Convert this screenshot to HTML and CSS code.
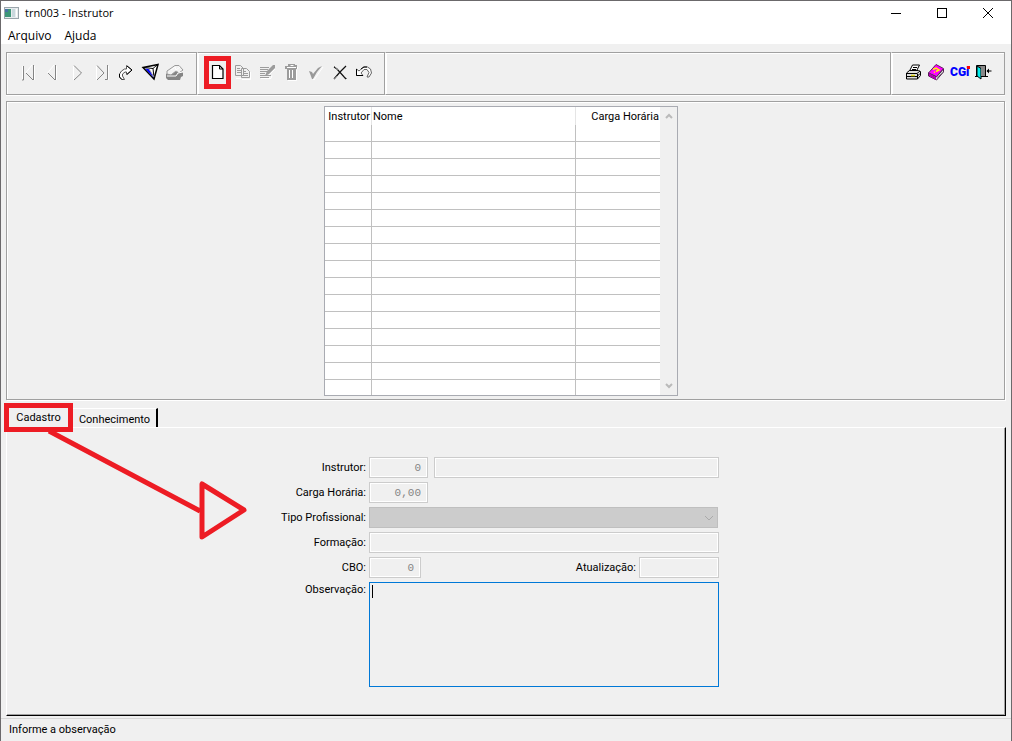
FILE: index.html
```html
<!DOCTYPE html>
<html lang="pt-BR">
<head>
<meta charset="utf-8">
<meta name="viewport" content="width=device-width, initial-scale=1">
<title>trn003 - Instrutor</title>
<link rel="stylesheet" href="styles.css">
</head>
<body>
<div class="window">
  <header class="titlebar">
    <svg class="app-icon" viewBox="0 0 15 12" aria-hidden="true"><rect x=".5" y=".5" width="14" height="11" fill="#e8ecee" stroke="#9aa5ab"/><rect x="1" y="2" width="6" height="8" fill="#3d9678"/><rect x="1" y="2" width="3" height="3" fill="#4773a5"/><rect x="8" y="2" width="3" height="8" fill="#c9d8dd"/><path d="M12.500 2v8" stroke="#fff"/></svg>
    <h1 class="title">trn003 - Instrutor</h1>
    <div class="window-buttons">
      <button class="window-button" type="button" aria-label="Minimizar"><svg viewBox="0 0 12 12"><path d="M1 6.500h10"/></svg></button>
      <button class="window-button" type="button" aria-label="Maximizar"><svg viewBox="0 0 12 12"><path d="M1.500 1.500h9v9h-9z"/></svg></button>
      <button class="window-button" type="button" aria-label="Fechar"><svg viewBox="0 0 12 12"><path class="smooth" d="M1 1l10 10M11 1L1 11"/></svg></button>
    </div>
  </header>
  <nav class="menubar">
    <button class="menu" type="button">Arquivo</button>
    <button class="menu" type="button">Ajuda</button>
  </nav>

  <div class="toolbar">
    <div class="group group-nav">
      <button class="tool" type="button" aria-label="Primeiro"><svg viewBox="0 0 20 20"><path class="light" d="M4.500 4v14M14 3L7.500 11M16.500 4v14"/><path class="gray" d="M5.500 4v14H4M8 11l7 7M15.500 3v15"/></svg></button>
      <button class="tool" type="button" aria-label="Anterior"><svg viewBox="0 0 20 20"><path class="light" d="M11 3L4.500 11M13.500 4v14"/><path class="gray" d="M5 11l7 7M12.500 3v15"/></svg></button>
      <button class="tool" type="button" aria-label="Próximo"><svg viewBox="0 0 20 20"><path class="light" d="M6.500 18V3"/><path class="gray" d="M7 3.500l7.500 7.500L7 18"/></svg></button>
      <button class="tool" type="button" aria-label="Último"><svg viewBox="0 0 20 20"><path class="light" d="M4.500 18V3M16.500 4v14"/><path class="gray" d="M5 3.500l7 7.500-7 7M15.500 3v14.500H13"/></svg></button>
      <button class="tool" type="button" aria-label="Ir para"><svg viewBox="0 0 20 20"><path d="M5.500 17.500L3.500 15v-3l2-3 3-2h2V3.500L16 8l-5.500 4.500V10H9l-2.500 2v2l2 3.500z" fill="#fff" stroke="#555"/><path d="M3.500 12v3l2.500 2.500M11 4l5 4-5 4.500" fill="none" stroke="#000"/></svg></button>
      <button class="tool" type="button" aria-label="Filtrar"><svg viewBox="0 0 20 20"><path d="M2 5.500L17 2.500 13 17z" fill="#fff" stroke="#000" stroke-width="1.500"/><path d="M4 6.500l4 .5 5 9z" fill="#00f"/><path d="M3 5.500l9 1 4-3.500M12 6.500l1 9" stroke="#000" fill="none"/><path d="M8 7l5 8" stroke="#99a"/></svg></button>
      <button class="tool" type="button" aria-label="Localizar"><svg viewBox="0 0 20 20"><path d="M1 12l4-2h13v4l-2 1-1 3H3l-2-2z" fill="#858585"/><path d="M2 9l8-5.500h4L18 8l-4 3-3-2-5 4-4-1z" fill="#f2f2f2" stroke="#999"/><path d="M6 8l4-3 1 3 4-3M2 14h9l2-3 5-1" stroke="#fff" fill="none"/></svg></button>
    </div>
    <div class="group group-edit">
      <button class="tool marked" type="button" aria-label="Novo"><svg viewBox="0 0 20 20"><path d="M4.500 3.500h7l3.500 3.500v9.500H4.500z" fill="#fff" stroke="#000" stroke-width="1.200"/><path d="M11.500 3v4H15" stroke="#000" fill="none"/></svg></button>
      <button class="tool" type="button" disabled aria-label="Copiar"><svg viewBox="0 0 20 20"><path class="off" d="M3.500 3.500h5l3 3v7h-8zM9.500 6.500h5l3 3v6h-8zM5 6.500h3M5 8.500h4M5 10.500h4M11 9.500h3M11 11.500h5M11 13.500h5"/><path d="M4 16.500h5M10 17.500h8.500V10" stroke="#fff" fill="none"/></svg></button>
      <button class="tool" type="button" disabled aria-label="Alterar"><svg viewBox="0 0 20 20"><path class="off" d="M3 5.500h9M3 7.500h8M3 9.500h7M3 11.500h5M3 13.500h11M3 15.500h9"/><path d="M8 14l2-5 6-6h2v3l-6 6z" fill="#9c9c9c"/><path d="M4 16.500h10l1-3M12 13l6-6" stroke="#fff" fill="none"/></svg></button>
      <button class="tool" type="button" disabled aria-label="Excluir"><svg viewBox="0 0 20 20"><path d="M4 4h3V2h7v1h2v4h-1v11H6V7H4z" fill="#9c9c9c"/><path d="M6 5.500h9M8.500 8v8M11.500 8v8M16.500 5v2M15.500 8v10.500H7" stroke="#fff" fill="none"/><path d="M9.500 3.500h3" stroke="#fff"/></svg></button>
      <button class="tool" type="button" disabled aria-label="Confirmar"><svg viewBox="0 0 20 20"><path d="M5 12l4 6 2-3 7-10" stroke="#fff" fill="none"/><path d="M4 9l3 1 1 2 5-6 4-2-5 6-4 7H7z" fill="#999"/></svg></button>
      <button class="tool" type="button" aria-label="Cancelar"><svg viewBox="0 0 20 20"><path d="M4 5l3 2 9 10M16 4l-6 6-6 7" stroke="#111" stroke-width="1.200" fill="none"/><path d="M4 4l4 4M4 17l3-3M14 14l3 3" stroke="#777"/></svg></button>
      <button class="tool" type="button" aria-label="Desfazer"><svg viewBox="0 0 20 20"><path d="M2.500 7v6.500H9L7 11l3-3.500h3l2 3-2 4.500h2l2.500-4-1-4-3-2h-4L5 9z" fill="#fff" stroke="#666"/><path d="M2.500 7v6.500H9M7 7l3-2h3" fill="none" stroke="#000"/></svg></button>
    </div>
    <div class="group group-fill"></div>
    <div class="group group-system">
      <button class="tool" type="button" aria-label="Imprimir"><svg viewBox="0 0 20 20"><path d="M6.500 9l3-6h7l-3 6z" fill="#fff" stroke="#000"/><path d="M10 5.500h4M9 7.500h4" stroke="#000"/><path d="M3.500 11l3-2.500h9l2 1v4l-3 3.500h-11z" fill="#ddd" stroke="#000"/><path d="M3 11.500h11l3-2.500M3 14.500h11l3-3M14.500 12v5" stroke="#000" fill="none"/><path d="M8 13.500h4" stroke="#dfd820" stroke-width="1.500"/></svg></button>
      <button class="tool" type="button" aria-label="Ajuda"><svg viewBox="0 0 20 20"><path d="M2.500 11L10 2.500l7.500 4-7 8z" fill="#f0f" stroke="#602060"/><path d="M2.500 11v3l8 4 7-8V7l-7 8z" fill="#fff" stroke="#502050"/><path d="M3 14l7 4v-3l-7-4z" fill="#b000b0"/><path d="M11 16.500l6-7" stroke="#777"/><path d="M7 7.500l3-1.500 3 2-3 1.500M8 10l1 .5" stroke="#ff0" stroke-width="1.500" fill="none"/></svg></button>
      <button class="tool brand" type="button">CGi<span class="brand-dot"></span></button>
      <button class="tool" type="button" aria-label="Sair"><svg viewBox="0 0 20 20"><path d="M3.500 3.500h9v11h-9z" fill="#777" stroke="#000"/><path d="M4 4l4 2.500V17l-4-3z" fill="#0ee" stroke="#000"/><path d="M8 4h4v10H8z" fill="#888"/><path d="M2 14.500h3M11 14.500h4M14 9h4.500" stroke="#000"/><path d="M13.500 9L16 6.500v5z" fill="#000"/></svg></button>
    </div>
  </div>

  <main class="main">
    <section class="list-panel">
      <div class="list">
        <table class="records">
          <thead><tr><th class="col-id">Instrutor</th><th class="col-name">Nome</th><th class="col-hours">Carga Horária</th></tr></thead>
          <tbody>
            <tr><td></td><td></td><td></td></tr><tr><td></td><td></td><td></td></tr><tr><td></td><td></td><td></td></tr><tr><td></td><td></td><td></td></tr>
            <tr><td></td><td></td><td></td></tr><tr><td></td><td></td><td></td></tr><tr><td></td><td></td><td></td></tr><tr><td></td><td></td><td></td></tr>
            <tr><td></td><td></td><td></td></tr><tr><td></td><td></td><td></td></tr><tr><td></td><td></td><td></td></tr><tr><td></td><td></td><td></td></tr>
            <tr><td></td><td></td><td></td></tr><tr><td></td><td></td><td></td></tr><tr><td></td><td></td><td></td></tr><tr class="last"><td></td><td></td><td></td></tr>
          </tbody>
        </table>
        <div class="scrollbar">
          <svg class="chevron" viewBox="0 0 8 6"><path d="M1 5l3-3 3 3"/></svg>
          <svg class="chevron" viewBox="0 0 8 6"><path d="M1 1l3 3 3-3"/></svg>
        </div>
      </div>
    </section>

    <div class="tabs" role="tablist">
      <button class="tab tab-marked" type="button" role="tab" aria-selected="true">Cadastro</button>
      <button class="tab tab-plain" type="button" role="tab" aria-selected="false">Conhecimento</button>
    </div>

    <section class="tab-panel" role="tabpanel">
      <svg class="arrow" viewBox="0 0 250 120" aria-hidden="true"><path d="M42 3l151 80M195 56v53l42-27z"/></svg>
      <form class="form">
        <label for="id">Instrutor:</label>
        <div class="fields"><input class="field w-number" id="id" value="0" disabled><input class="field grow" aria-label="Nome do instrutor" disabled></div>
        <label for="hours">Carga Horária:</label>
        <div class="fields"><input class="field w-number" id="hours" value="0,00" disabled></div>
        <label for="type">Tipo Profissional:</label>
        <div class="fields select-wrap"><select class="select" id="type" disabled><option></option></select><svg class="chevron select-chevron" viewBox="0 0 10 6"><path d="M1 1l4 4 4-4"/></svg></div>
        <label for="education">Formação:</label>
        <div class="fields"><input class="field grow" id="education" disabled></div>
        <label for="cbo">CBO:</label>
        <div class="fields spread"><input class="field w-code" id="cbo" value="0" disabled><span class="pair"><label for="updated">Atualização:</label><input class="field w-date" id="updated" disabled></span></div>
        <label class="label-top" for="notes">Observação:</label>
        <div class="fields notes-wrap"><textarea class="notes" id="notes"></textarea><span class="caret"></span></div>
      </form>
    </section>
  </main>
  <footer class="status">Informe a observação</footer>
</div>
</body>
</html>
```

FILE: styles.css
```css
* { box-sizing: border-box; }

body {
  margin: 0;
  font: 11px/16px Roboto, "Liberation Sans", sans-serif;
  color: #000;
  background: #f0f0f0;
}

button, input, select, textarea {
  font: inherit;
  color: inherit;
  margin: 0;
  padding: 0;
  border: 0;
  border-radius: 0;
  background: none;
}

.window {
  display: flex;
  flex-direction: column;
  min-height: 100vh;
  border: 1px solid #6b696b;
}

.titlebar {
  display: flex;
  align-items: center;
  height: 24px;
  padding-left: 3px;
  background: #fff;
  font-family: "Open Sans", sans-serif;
}
.app-icon { width: 15px; height: 12px; }
.title { flex: 1; margin: 0 0 0 6px; font-size: 11px; font-weight: 400; }
.window-buttons { display: flex; }
.window-button { width: 46px; height: 24px; display: grid; place-items: center; }
.window-button svg { width: 12px; height: 12px; fill: none; stroke: #000; shape-rendering: crispEdges; }
.window-button .smooth { shape-rendering: auto; }

.menubar {
  display: flex;
  gap: 13px;
  height: 19px;
  padding-left: 7px;
  background: #fff;
}
.menu { height: 22px; font: 12px/22px "Open Sans", sans-serif; }

.toolbar { display: flex; height: 43px; margin: 8px 6px 0 5px; }
.group {
  display: flex;
  align-items: center;
  justify-content: space-between;
  border: 1px solid #a0a0a0;
  box-shadow: inset 1px 1px 0 #fff, 0 1px 0 #fff;
}
.group + .group { border-left-color: #fff; }
.group-nav { width: 191px; padding: 0 9px 3px; }
.group-edit { width: 188px; padding: 0 8px 3px 7px; }
.group-fill { flex: 1; }
.group-system { width: 114px; padding: 0 9px 3px; }
.tool { display: grid; place-items: center; width: 24px; height: 24px; }
.tool svg { width: 20px; height: 20px; }
.light { fill: none; stroke: #fff; }
.gray { fill: none; stroke: #858585; }
.off { fill: none; stroke: #9c9c9c; }
.marked { width: 25px; height: 31px; outline: 5px solid #ed1c24; outline-offset: -4px; }
.brand { position: relative; font-size: 12px; font-weight: 900; color: #00f; }
.brand-dot { position: absolute; right: 2px; top: 6px; width: 3px; height: 3px; background: #f00; }

.main { flex: 1; display: flex; flex-direction: column; padding: 6px 5px 2px; }

.list-panel {
  display: flex;
  justify-content: center;
  height: 299px;
  margin-right: 1px;
  padding: 4px 9px 3px 0;
  border: 1px solid #a0a0a0;
  box-shadow: inset 1px 1px 0 #fff, 1px 1px 0 #fff;
}
.list { display: flex; width: 354px; height: 290px; border: 1px solid #a9abb2; background: #fff; overflow: hidden; }
.records { width: 335px; height: 288px; table-layout: fixed; border-collapse: separate; border-spacing: 0; }
.records th { height: 18px; padding: 1px 1px 0; font-weight: 400; text-align: left; border-right: 1px solid #e5e5e5; white-space: nowrap; }
.records td { height: 17px; padding: 0; border: 0 solid #c0c0c0; border-width: 0 1px 1px 0; }
.records .last td { height: 15px; border-bottom: 0; }
.records th:last-child, .records td:last-child { border-right: 0; }
.records .col-id { width: 47px; text-align: right; }
.records .col-name { width: 204px; }
.records .col-hours { text-align: right; }
.scrollbar {
  width: 17px;
  padding: 6px 0;
  display: flex;
  flex-direction: column;
  align-items: center;
  justify-content: space-between;
  background: #f0f0f0;
}
.chevron { width: 8px; height: 6px; fill: none; stroke: #bababa; stroke-width: 2; }

.tabs { display: flex; align-items: flex-end; height: 27px; }
.tab { height: 19px; }
.tab-marked {
  z-index: 1;
  width: 69px;
  height: 29px;
  margin: 0 0 -5px -2px;
  padding-top: 1px;
  border: 5px solid #ed1c24;
  background: #f0f0f0;
}
.tab-plain {
  width: 85px;
  padding-top: 3px;
  border-top: 1px solid #fff;
  border-right: 2px solid #000;
}

.tab-panel {
  position: relative;
  flex: 1;
  padding: 29px 13px 28px 0;
  border: 1px solid #fff;
  border-right: 1px solid #000;
  border-bottom: 1px solid #000;
  box-shadow: inset -1px -1px 0 #a0a0a0;
}
.arrow {
  position: absolute;
  left: 0;
  top: 0;
  width: 250px;
  height: 120px;
  fill: none;
  stroke: #ed1c24;
  stroke-width: 5;
  stroke-linejoin: round;
}

.form {
  display: grid;
  grid-template-columns: 86px 350px;
  column-gap: 3px;
  row-gap: 4px;
  justify-content: center;
  align-items: center;
}
.form label { padding-top: 1px; text-align: right; white-space: nowrap; }
.form .label-top { align-self: start; padding-top: 0; }
.fields { display: flex; gap: 6px; min-width: 0; }
.spread { justify-content: space-between; }
.pair { display: flex; align-items: center; gap: 3px; }
.field {
  height: 21px;
  min-width: 0;
  padding: 0 6px;
  border: 1px solid #ccc;
  box-shadow: inset 0 0 0 1px #fff;
  background: #f0f0f0;
  color: #858585;
  font: 11px/19px "Liberation Mono", monospace;
  text-align: right;
}
.w-number { width: 59px; }
.w-code { width: 52px; }
.w-date { width: 80px; }
.grow { flex: 1; }
.select-wrap { position: relative; }
.select { appearance: none; flex: 1; height: 21px; margin-right: 1px; border: 1px solid #bfbfbf; background: #ccc; opacity: 1; }
.select-chevron { position: absolute; right: 5px; top: 8px; width: 10px; height: 6px; stroke: #aaa; stroke-width: 1; }
.notes-wrap { position: relative; }
.notes { flex: 1; height: 105px; padding: 3px; border: 1px solid #0078d7; background: #f0f0f0; resize: none; outline: 0; }
.caret { position: absolute; left: 3px; top: 3px; width: 1px; height: 13px; background: #000; }

.status { height: 23px; padding: 3px 8px 0; border-top: 1px solid #d7d7d7; }
```
